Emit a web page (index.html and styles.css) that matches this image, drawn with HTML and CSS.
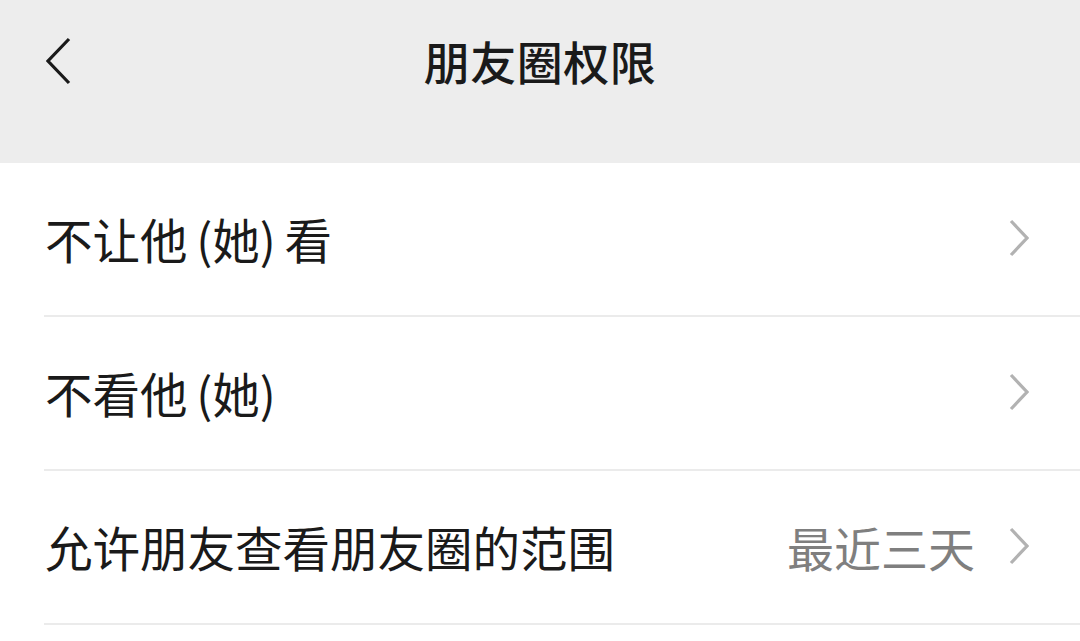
FILE: index.html
```html
<!DOCTYPE html>
<html lang="zh-CN">
<head>
  <meta charset="UTF-8">
  <meta name="viewport" content="width=device-width, initial-scale=1.0">
  <title>朋友圈权限</title>
  <link rel="stylesheet" href="styles.css">
</head>
<body>

  <header>
    <div class="nav-bar">
      <button class="back-btn" aria-label="返回">
        <svg width="26" height="48" viewBox="0 0 26 48">
          <polyline points="23,2 2,24 23,46" fill="none" stroke="#1a1a1a" stroke-width="3.2"/>
        </svg>
      </button>
      <h1>朋友圈权限</h1>
    </div>
  </header>

  <!-- Permission options -->
  <ul class="settings-list">
    <li class="settings-row">
      <span class="row-label">不让他 (她) 看</span>
      <span class="chevron">
        <svg width="20" height="38" viewBox="0 0 20 38">
          <polyline points="2,2 18,19 2,36" fill="none" stroke="#b2b2b2" stroke-width="3.2"/>
        </svg>
      </span>
    </li>
    <li class="settings-row">
      <span class="row-label">不看他 (她)</span>
      <span class="chevron">
        <svg width="20" height="38" viewBox="0 0 20 38">
          <polyline points="2,2 18,19 2,36" fill="none" stroke="#b2b2b2" stroke-width="3.2"/>
        </svg>
      </span>
    </li>
    <li class="settings-row">
      <span class="row-label">允许朋友查看朋友圈的范围</span>
      <span class="row-value">最近三天</span>
      <span class="chevron">
        <svg width="20" height="38" viewBox="0 0 20 38">
          <polyline points="2,2 18,19 2,36" fill="none" stroke="#b2b2b2" stroke-width="3.2"/>
        </svg>
      </span>
    </li>
  </ul>

</body>
</html>
```

FILE: styles.css
```css
/* General Reset */
* {
  margin: 0;
  padding: 0;
  box-sizing: border-box;
}

body {
  font-family: "Noto Sans CJK SC", "Noto Sans", sans-serif;
  background-color: #ffffff;
  color: #1a1a1a;
}

header {
  background-color: #ededed;
  height: 163px;
}

.nav-bar {
  position: relative;
  height: 120px;
  display: flex;
  justify-content: center;
  align-items: center;
}

.nav-bar h1 {
  font-size: 46px;
  font-weight: 500;
  letter-spacing: 0.5px;
}

.back-btn {
  position: absolute;
  left: 46px;
  top: 37px;
  background: none;
  border: none;
  display: flex;
}

.settings-list {
  list-style: none;
  margin-left: 44px;
}

.settings-row {
  height: 154px;
  display: flex;
  align-items: center;
  border-bottom: 2px solid #ebebeb;
  padding-right: 51px;
  padding-bottom: 2px;
}

.row-label {
  flex: 1;
  font-size: 47.5px;
  word-spacing: -2px;
  padding-left: 1px;
}

.row-value {
  font-size: 47px;
  color: #7f7f7f;
  margin-right: 34px;
}

.chevron {
  display: flex;
}
```
